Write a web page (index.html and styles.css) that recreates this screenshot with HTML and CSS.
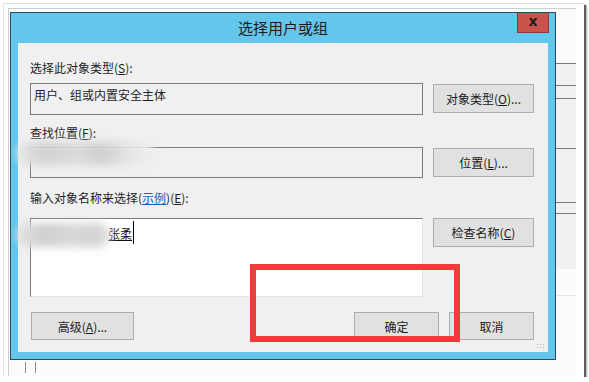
FILE: index.html
```html
<!DOCTYPE html>
<html lang="zh-CN">
<head>
<meta charset="utf-8">
<title>选择用户或组</title>
<link rel="stylesheet" href="styles.css">
</head>
<body>
<div class="frame">
 <div class="shot">
  <div class="shot-top">
   <div class="dialog">
    <div class="titlebar">
     <span class="title-pad"></span>
     <span class="title">选择用户或组</span>
     <span class="close">x</span>
    </div>
    <div class="client">
     <div class="label lbl-1">选择此对象类型(<u>S</u>):</div>
     <div class="row row-1">
      <div class="box">用户、组或内置安全主体</div>
      <button class="btn">对象类型(<u>O</u>)...</button>
     </div>
     <div class="label lbl-2">查找位置(<u>F</u>):</div>
     <div class="row row-2">
      <div class="box"></div>
      <button class="btn">位置(<u>L</u>)...</button>
     </div>
     <div class="label lbl-3">输入对象名称来选择(<a href="#">示例</a>)(<u>E</u>):</div>
     <div class="row row-3">
      <div class="names"><span class="redacted"></span><span class="name">张柔</span><span class="caret"></span></div>
      <button class="btn">检查名称(<u>C</u>)</button>
     </div>
     <div class="footer">
      <button class="btn btn-wide">高级(<u>A</u>)...</button>
      <button class="btn btn-sm btn-ok">确定</button>
      <button class="btn btn-sm">取消</button>
     </div>
     <span class="grip"></span>
    </div>
   </div>
   <div class="side">
    <div class="side-top">
     <div class="ln ln-1"></div>
     <div class="ln ln-2"></div>
     <div class="ln ln-3"></div>
     <div class="ln ln-4"></div>
     <div class="ln ln-5"></div>
     <div class="ln ln-6"></div>
    </div>
    <div class="ln-light"></div>
   </div>
  </div>
  <div class="shot-bottom">
   <span class="vl vl-1"></span>
   <span class="vl vl-2"></span>
  </div>
 </div>
</div>

<!-- privacy blur and red annotation lie over the screenshot -->
<div class="blur blur-1"></div>
<div class="blur blur-2"></div>
<div class="mark"></div>
</body>
</html>
```

FILE: styles.css
```css
body{
 margin:0;
 background:#fff;
 font-family:"Noto Sans CJK SC","Liberation Sans",sans-serif;
 font-size:12px;
 color:#1e1e1e;
}
.frame{
 margin:3px 0 0 3px;
 width:581px;
 height:374px;
 box-sizing:border-box;
 padding:4px 0 0 4px;
 border-left:1px solid #e2e2e2;
 border-top:1px solid #e2e2e2;
 box-shadow:2px 2px 1px #5e5e5e, 3px 3px 2px rgba(0,0,0,.25);
}
.shot{
 width:568px;
 height:368px;
 box-sizing:border-box;
 border-left:1px solid #d0d0d0;
 border-top:1px solid #d0d0d0;
 background:#fbfbfb;
 display:flex;
 flex-direction:column;
}
.shot-top{
 display:flex;
 height:351px;
}

/* dialog window */
.dialog{
 margin:3px 0 0 1px;
 width:546px;
 height:348px;
 box-sizing:border-box;
 border:1px solid #274a66;
 background:#63c6ea;
 display:flex;
 flex-direction:column;
}
.titlebar{
 height:30px;
 display:flex;
 align-items:flex-start;
}
.title-pad{
 width:38px;
}
.title{
 flex:1;
 text-align:center;
 font-size:15px;
 line-height:30px;
 color:#1b1b1b;
}
.close{
 width:32px;
 height:20px;
 box-sizing:border-box;
 margin-right:6px;
 background:#c9544c;
 border:1px solid #8d3a34;
 border-top:0;
 color:#1a1a1a;
 font-family:"DejaVu Sans",sans-serif;
 font-weight:bold;
 font-size:14px;
 line-height:17px;
 text-align:center;
}
.client{
 position:relative;
 margin:0 7px;
 height:309px;
 box-sizing:border-box;
 padding:0 14px 0 12px;
 background:#f0f0f0;
 display:flex;
 flex-direction:column;
}
.label{
 height:16px;
 line-height:16px;
 white-space:nowrap;
}
.label a{
 color:#0a63c9;
 text-decoration:underline;
}
.lbl-1{ margin-top:17px; }
.lbl-2{ margin-top:10px; }
.lbl-3{ margin-top:12px; }

.row{
 display:flex;
 align-items:flex-start;
}
.row-1{ margin-top:7px; }
.row-2{ margin-top:6px; }
.row-3{ margin-top:12px; }

.box{
 width:393px;
 height:32px;
 box-sizing:border-box;
 border:1px solid #7b7b7b;
 padding:3px 3px;
 line-height:16px;
}
.row-2 .box{
 height:31px;
}
.names{
 width:393px;
 height:79px;
 box-sizing:border-box;
 background:#fff;
 border:1px solid #e3e3e3;
 border-top-color:#7b7b7b;
 border-left-color:#7b7b7b;
 padding:7px 0 0 0;
 line-height:16px;
 display:flex;
 align-items:flex-start;
}
.redacted{
 width:77px;
}
.name{
 text-decoration:underline;
 color:#111;
}
.caret{
 width:1px;
 height:23px;
 margin:-5px 0 0 1px;
 background:#000;
}

.btn{
 margin:1px 0 0 10px;
 width:101px;
 height:29px;
 box-sizing:border-box;
 border:1px solid #adadad;
 background:#e1e1e1;
 font-family:inherit;
 font-size:12px;
 color:#1a1a1a;
 padding:0;
}
.row-3 .btn{
 margin-top:0;
}
.footer{
 margin-top:15px;
 display:flex;
}
.footer .btn{
 margin:0;
 height:28px;
}
.btn-wide{
 width:103px;
 margin-left:1px !important;
}
.btn-sm{
 width:85px;
}
.btn-ok{
 margin-left:auto !important;
 margin-right:10px !important;
}
.grip{
 position:absolute;
 right:3px;
 bottom:2px;
 width:9px;
 height:7px;
 background:radial-gradient(circle,#b9b9b9 0.8px,transparent 1px) 0 0/3px 3px;
}

/* bits of the windows behind */
.side{
 width:20px;
}
.side-top{
 background:#f0f0f0;
 height:206px;
 box-sizing:border-box;
}
.ln{
 height:1px;
 background:#787878;
}
.ln-1{ margin-top:54px; }
.ln-2{ margin-top:21px; }
.ln-3{ margin-top:12px; }
.ln-4{ margin-top:49px; }
.ln-5{ margin-top:53px; }
.ln-6{ margin-top:10px; }
.ln-light{
 margin-top:26px;
 height:1px;
 background:#e4e4e4;
}
.shot-bottom{
 flex:1;
 display:flex;
 padding:2px 0 0 16px;
}
.vl{
 width:1px;
 height:11px;
 background:#8a8a8a;
}
.vl-2{
 margin-left:9px;
}

.blur{
 position:absolute;
 border-radius:12px;
 filter:blur(4px);
}
.blur-1{
 left:17px;
 top:142px;
 width:138px;
 height:23px;
 background:linear-gradient(90deg,#e6e6e6 0,#d2d2d2 20%,#dcdcdc 45%,#cfcfcf 60%,#e8e8e8 85%,#efefef 100%);
}
.blur-2{
 left:17px;
 top:223px;
 width:94px;
 height:24px;
 background:linear-gradient(90deg,#e2e2e2 0,#cfcfcf 30%,#d8d8d8 60%,#d2d2d2 85%,#e6e6e6 100%);
}
.mark{
 position:absolute;
 left:250px;
 top:264px;
 width:210px;
 height:78px;
 box-sizing:border-box;
 border:6px solid #f03b3b;
}
```
